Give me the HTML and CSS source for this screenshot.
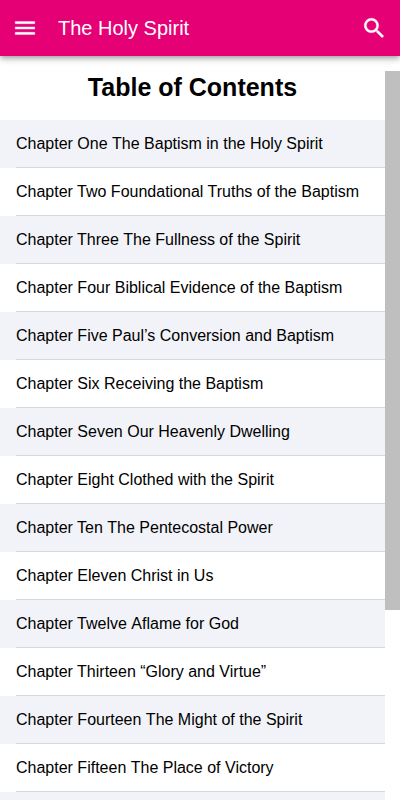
FILE: index.html
```html
<!DOCTYPE html>
<html lang="en">
<head>
    <meta charset="utf-8">
    <meta name="viewport" content="width=device-width, initial-scale=1.0">
    <title>The Holy Spirit</title>
    <link rel="stylesheet" href="styles.css">
</head>
<body>
    <header class="toolbar">
        <button type="button" class="icon-button" aria-label="Menu">
            <svg class="icon" viewBox="0 0 512 512"><path d="M64 384h384v-42.67H64zm0-106.67h384v-42.66H64zM64 128v42.67h384V128z"/></svg>
        </button>
        <div class="toolbar-title">The Holy Spirit</div>
        <button type="button" class="icon-button" aria-label="Search">
            <svg class="icon" viewBox="0 0 512 512"><path d="M337.509 305.372h-17.501l-6.571-5.486c20.791-25.232 33.922-57.054 33.922-93.257C347.358 127.632 283.896 64 205.135 64 127.452 64 64 127.632 64 206.629s63.452 142.628 142.225 142.628c35.011 0 67.831-13.167 92.991-34.008l6.561 5.487v17.551L415.18 448 448 415.086 337.509 305.372zm-131.284 0c-54.702 0-98.463-43.887-98.463-98.743 0-54.858 43.761-98.742 98.463-98.742 54.7 0 98.462 43.884 98.462 98.742 0 54.856-43.762 98.743-98.462 98.743z"/></svg>
        </button>
    </header>
    <main class="content">
        <div class="page">
            <h1 class="heading">Table of Contents</h1>
            <ul class="chapters">
                <li class="chapter"><span>Chapter One&nbsp;The Baptism in the Holy Spirit</span></li>
                <li class="chapter"><span>Chapter Two&nbsp;Foundational Truths of the Baptism</span></li>
                <li class="chapter"><span>Chapter Three&nbsp;The Fullness of the Spirit</span></li>
                <li class="chapter"><span>Chapter Four&nbsp;Biblical Evidence of the Baptism</span></li>
                <li class="chapter"><span>Chapter Five&nbsp;Paul’s Conversion and Baptism</span></li>
                <li class="chapter"><span>Chapter Six&nbsp;Receiving the Baptism</span></li>
                <li class="chapter"><span>Chapter Seven&nbsp;Our Heavenly Dwelling</span></li>
                <li class="chapter"><span>Chapter Eight&nbsp;Clothed with the Spirit</span></li>
                <li class="chapter"><span>Chapter Ten&nbsp;The Pentecostal Power</span></li>
                <li class="chapter"><span>Chapter Eleven&nbsp;Christ in Us</span></li>
                <li class="chapter"><span>Chapter Twelve&nbsp;Aflame for God</span></li>
                <li class="chapter"><span>Chapter Thirteen&nbsp;“Glory and Virtue”</span></li>
                <li class="chapter"><span>Chapter Fourteen&nbsp;The Might of the Spirit</span></li>
                <li class="chapter"><span>Chapter Fifteen&nbsp;The Place of Victory</span></li>
                <li class="chapter"></li>
            </ul>
        </div>
        <div class="scroll-track">
            <div class="scroll-thumb"></div>
        </div>
    </main>
</body>
</html>
```

FILE: styles.css
```css
* {
    box-sizing: border-box;
}
body {
    display: flex;
    flex-direction: column;
    height: 100vh;
    margin: 0;
    overflow: hidden;
    background-color: #ffffff;
    font-family: "Liberation Sans", Arial, sans-serif;
    color: #000000;
}
/* Toolbar */
.toolbar {
    position: relative;
    z-index: 1;
    display: flex;
    flex: none;
    align-items: center;
    height: 56px;
    padding: 0 3.5px 0 2px;
    background-color: #e60076;
    color: #ffffff;
    box-shadow: 0 2px 4px -1px rgba(0, 0, 0, 0.2), 0 4px 5px 0 rgba(0, 0, 0, 0.14), 0 1px 10px 0 rgba(0, 0, 0, 0.12);
}
.icon-button {
    display: flex;
    flex: none;
    align-items: center;
    justify-content: center;
    width: 46px;
    height: 48px;
    padding: 0;
    border: none;
    background: none;
    color: inherit;
}
.icon {
    width: 26px;
    height: 26px;
    fill: currentColor;
    stroke: currentColor;
    stroke-width: 7;
}
.toolbar-title {
    flex: 1;
    padding-left: 10px;
    font-size: 20px;
}
/* Page */
.content {
    display: flex;
    flex: 1;
    min-height: 0;
}
.page {
    flex: 1;
    overflow: hidden;
}
.heading {
    margin: 0;
    padding-top: 16px;
    height: 64px;
    font-size: 25px;
    line-height: 31px;
    text-align: center;
}
/* Chapter list */
.chapters {
    margin: 0;
    padding: 0;
    list-style: none;
}
.chapter {
    height: 48px;
    padding-left: 16px;
    font-size: 16px;
    line-height: 47px;
}
.chapter:nth-child(odd) {
    background-color: #f2f3f8;
}
.chapter span {
    display: block;
    border-bottom: 1px solid #d7d8da;
}
/* Scrollbar */
.scroll-track {
    flex: none;
    width: 15px;
    padding-top: 15px;
}
.scroll-thumb {
    height: 539px;
    background-color: #bfbfbf;
}
```
